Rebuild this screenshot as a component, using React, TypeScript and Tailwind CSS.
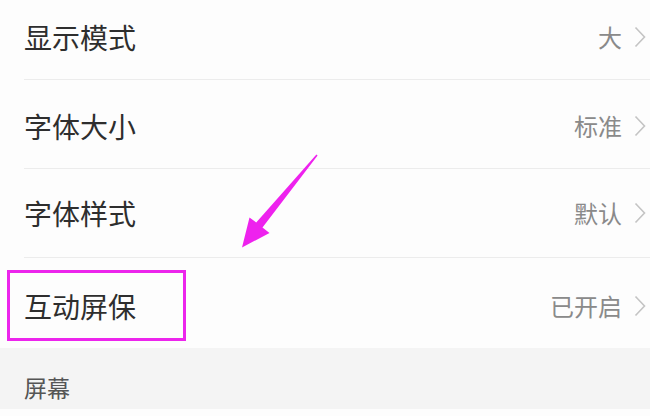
import { ReactNode } from "react";

const font = { fontFamily: '"Noto Sans CJK SC", "Noto Sans", sans-serif' };

const Chevron = () => (
  <svg width="12" height="22" viewBox="0 0 12 22" className="ml-[12px] shrink-0">
    <path d="M1.5 1.5 L10.5 11 L1.5 20.5" fill="none" stroke="#c4c4c4" strokeWidth="1.6" />
  </svg>
);

const Row = ({
  title,
  value,
  height,
  divider = true,
  children,
}: {
  title: string;
  value: string;
  height: string;
  divider?: boolean;
  children?: ReactNode;
}) => (
  <div className="relative pl-[24px]">
    <div
      className={`flex items-center justify-between pr-[4px] ${height} ${
        divider ? "border-b border-[#ececec]" : ""
      }`}
    >
      <span className="text-[28px] leading-none text-[#2e2e2e]">{title}</span>
      <div className="flex items-center">
        <span className="text-[24px] leading-none text-[#8a8a8a]">{value}</span>
        <Chevron />
      </div>
    </div>
    {children}
  </div>
);

export default function App() {
  return (
    <div className="relative h-[416px] w-[650px] overflow-hidden bg-[#fdfdfd]" style={font}>
      <Row title="显示模式" value="大" height="h-[80px] pb-[6px]" />
      <Row title="字体大小" value="标准" height="h-[89px] pt-[4px]" />
      <Row title="字体样式" value="默认" height="h-[89px]" />
      <Row title="互动屏保" value="已开启" height="h-[90px] pt-[6px]" divider={false} />

      <div className="flex h-[61px] items-center bg-[#f4f4f4] pl-[24px] pt-[18px]">
        <span className="text-[23px] leading-none text-[#555555]">屏幕</span>
      </div>

      {/* highlight box */}
      <div className="absolute left-[7px] top-[270px] h-[71px] w-[179px] border-[3px] border-[#ec25ec]" />

      {/* arrow */}
      <svg
        className="absolute left-[230px] top-[145px] h-[110px] w-[100px]"
        viewBox="230 145 100 110"
      >
        <polygon
          points="317.6,155.5 316.4,154.5 256.2,222.5 249.5,217.5 242,247.5 269.5,233 262.5,227.5"
          fill="#ee22ee"
        />
      </svg>
    </div>
  );
}
